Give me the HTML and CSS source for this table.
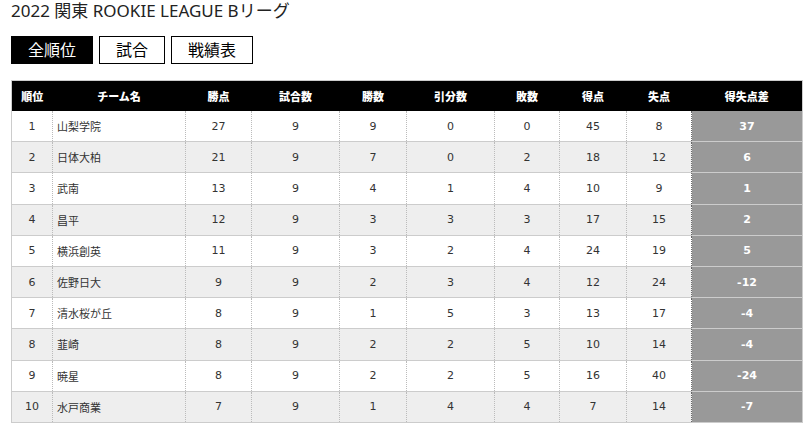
FILE: index.html
```html
<!DOCTYPE html>
<html lang="ja">
<head>
<meta charset="utf-8">
<title>2022 関東 ROOKIE LEAGUE Bリーグ</title>
<link rel="stylesheet" href="styles.css">
</head>
<body>
<div class="page">
  <h1 class="title">2022 関東 ROOKIE LEAGUE Bリーグ</h1>
  <div class="tabs">
    <a class="tab active">全順位</a>
    <a class="tab">試合</a>
    <a class="tab">戦績表</a>
  </div>
  <table class="standings">
    <colgroup>
      <col class="c-rank"><col class="c-team"><col class="c-pts"><col class="c-games"><col class="c-win"><col class="c-draw"><col class="c-lose"><col class="c-gf"><col class="c-ga"><col class="c-gd">
    </colgroup>
    <thead>
      <tr><th>順位</th><th>チーム名</th><th>勝点</th><th>試合数</th><th>勝数</th><th>引分数</th><th>敗数</th><th>得点</th><th>失点</th><th>得失点差</th></tr>
    </thead>
    <tbody>
      <tr><td>1</td><td class="team">山梨学院</td><td>27</td><td>9</td><td>9</td><td>0</td><td>0</td><td>45</td><td>8</td><td class="gd">37</td></tr>
      <tr><td>2</td><td class="team">日体大柏</td><td>21</td><td>9</td><td>7</td><td>0</td><td>2</td><td>18</td><td>12</td><td class="gd">6</td></tr>
      <tr><td>3</td><td class="team">武南</td><td>13</td><td>9</td><td>4</td><td>1</td><td>4</td><td>10</td><td>9</td><td class="gd">1</td></tr>
      <tr><td>4</td><td class="team">昌平</td><td>12</td><td>9</td><td>3</td><td>3</td><td>3</td><td>17</td><td>15</td><td class="gd">2</td></tr>
      <tr><td>5</td><td class="team">横浜創英</td><td>11</td><td>9</td><td>3</td><td>2</td><td>4</td><td>24</td><td>19</td><td class="gd">5</td></tr>
      <tr><td>6</td><td class="team">佐野日大</td><td>9</td><td>9</td><td>2</td><td>3</td><td>4</td><td>12</td><td>24</td><td class="gd">-12</td></tr>
      <tr><td>7</td><td class="team">清水桜が丘</td><td>8</td><td>9</td><td>1</td><td>5</td><td>3</td><td>13</td><td>17</td><td class="gd">-4</td></tr>
      <tr><td>8</td><td class="team">韮崎</td><td>8</td><td>9</td><td>2</td><td>2</td><td>5</td><td>10</td><td>14</td><td class="gd">-4</td></tr>
      <tr><td>9</td><td class="team">暁星</td><td>8</td><td>9</td><td>2</td><td>2</td><td>5</td><td>16</td><td>40</td><td class="gd">-24</td></tr>
      <tr><td>10</td><td class="team">水戸商業</td><td>7</td><td>9</td><td>1</td><td>4</td><td>4</td><td>7</td><td>14</td><td class="gd">-7</td></tr>
    </tbody>
  </table>
</div>
</body>
</html>
```
FILE: styles.css
```css
html, body {
  margin: 0;
  padding: 0;
  background: #fff;
}
.page {
  padding: 0 7px 0 11px;
  font-family: "DejaVu Sans", "Noto Sans CJK JP", sans-serif;
  color: #333;
}
.title {
  margin: 0;
  font-family: "Noto Sans", "Noto Sans CJK JP", sans-serif;
  font-size: 17px;
  font-weight: normal;
  line-height: 22px;
  color: #222;
}
.tabs {
  display: flex;
  gap: 6px;
  margin-top: 14px;
}
.tab {
  display: block;
  box-sizing: border-box;
  height: 28px;
  padding: 0 16px;
  border: 1px solid #000;
  font-family: "Noto Sans CJK JP", sans-serif;
  font-size: 16px;
  line-height: 25px;
  color: #000;
  background: #fff;
}
.tab.active {
  background: #000;
  color: #fff;
}
.standings {
  margin-top: 16px;
  width: 791px;
  table-layout: fixed;
  border-collapse: collapse;
  border: 1px solid #ccc;
  font-size: 11px;
}
.c-rank { width: 41px; }
.c-team { width: 133px; }
.c-pts { width: 66px; }
.c-games { width: 88px; }
.c-win { width: 67px; }
.c-draw { width: 88px; }
.c-lose { width: 65px; }
.c-gf { width: 67px; }
.c-ga { width: 65px; }
.c-gd { width: 111px; }
.standings th {
  background: #000;
  color: #fff;
  height: 30px;
  padding: 0;
  font-family: "Noto Sans CJK JP", sans-serif;
  font-weight: 900;
  font-size: 11px;
  text-align: center;
}
.standings td {
  height: 30.2px;
  padding: 0;
  text-align: center;
  border-left: 1px dotted #bbb;
  border-bottom: 1px solid #ccc;
}
.standings td:first-child {
  border-left: 1px solid #ccc;
}
.standings tbody tr:nth-child(even) td {
  background: #eee;
}
.standings td.team {
  text-align: left;
  padding-left: 4px;
  font-family: "Noto Sans CJK JP", sans-serif;
}
.standings td.gd,
.standings tbody tr:nth-child(even) td.gd {
  background: #999;
  color: #fff;
  font-weight: bold;
  border-left: 1px dotted #666;
}
```
